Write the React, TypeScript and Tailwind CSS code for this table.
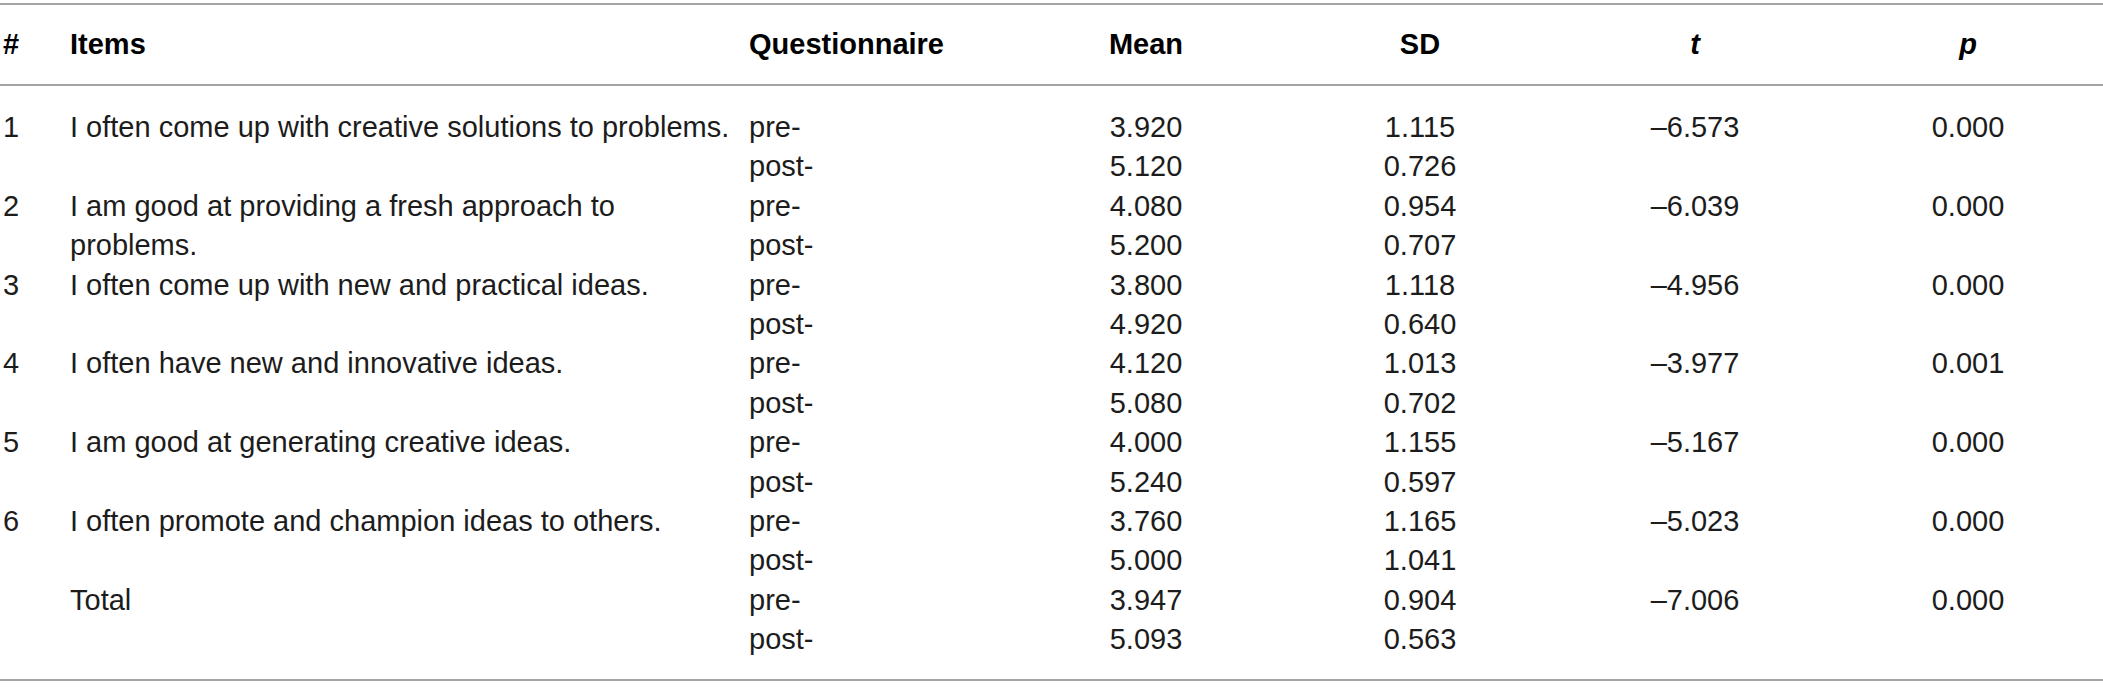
const rows = [
  { n: "1", item: ["I often come up with creative solutions to problems."], pre: ["3.920", "1.115"], post: ["5.120", "0.726"], t: "–6.573", p: "0.000" },
  { n: "2", item: ["I am good at providing a fresh approach to", "problems."], pre: ["4.080", "0.954"], post: ["5.200", "0.707"], t: "–6.039", p: "0.000" },
  { n: "3", item: ["I often come up with new and practical ideas."], pre: ["3.800", "1.118"], post: ["4.920", "0.640"], t: "–4.956", p: "0.000" },
  { n: "4", item: ["I often have new and innovative ideas."], pre: ["4.120", "1.013"], post: ["5.080", "0.702"], t: "–3.977", p: "0.001" },
  { n: "5", item: ["I am good at generating creative ideas."], pre: ["4.000", "1.155"], post: ["5.240", "0.597"], t: "–5.167", p: "0.000" },
  { n: "6", item: ["I often promote and champion ideas to others."], pre: ["3.760", "1.165"], post: ["5.000", "1.041"], t: "–5.023", p: "0.000" },
  { n: "", item: ["Total"], pre: ["3.947", "0.904"], post: ["5.093", "0.563"], t: "–7.006", p: "0.000" },
];

const cols = "grid grid-cols-[70px_679px_260px_274px_274px_276px_270px]";

function Rule() {
  return <div className="h-[2px] w-full bg-[#a3a3a3]" />;
}

export default function App() {
  return (
    <div
      className="w-[2103px] h-[699px] bg-white pt-[3px] text-[29px] leading-[39.4px] text-[#1c1c1c]"
      style={{ fontFamily: '"Liberation Sans", Arial, sans-serif' }}
    >
      <Rule />

      {/* Header */}
      <div className={`${cols} py-[20px] font-bold text-black whitespace-nowrap`}>
        <div className="pl-[3px]">#</div>
        <div>Items</div>
        <div>Questionnaire</div>
        <div className="text-center">Mean</div>
        <div className="text-center">SD</div>
        <div className="text-center italic">t</div>
        <div className="text-center italic">p</div>
      </div>

      <Rule />

      {/* Body */}
      <div className="pt-[21.5px] pb-[19.5px]">
        {rows.map((r, i) => (
          <div key={i} className={`${cols} whitespace-nowrap`}>
            <div className="pl-[3px]">{r.n}</div>
            <div>
              {r.item.map((line, j) => (
                <div key={j}>{line}</div>
              ))}
            </div>
            <div>
              <div>pre-</div>
              <div>post-</div>
            </div>
            <div className="text-center">
              <div>{r.pre[0]}</div>
              <div>{r.post[0]}</div>
            </div>
            <div className="text-center">
              <div>{r.pre[1]}</div>
              <div>{r.post[1]}</div>
            </div>
            <div className="text-center">{r.t}</div>
            <div className="text-center">{r.p}</div>
          </div>
        ))}
      </div>

      <Rule />
    </div>
  );
}
